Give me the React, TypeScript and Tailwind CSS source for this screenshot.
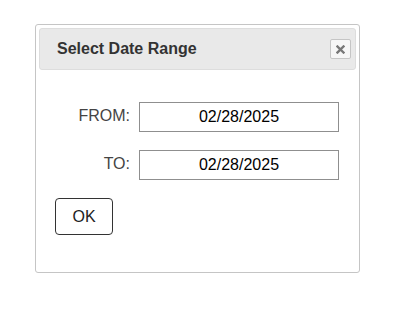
import React, { useState } from 'react';

const today = '02/28/2025';

export default function App() {
  const [from, setFrom] = useState(today);
  const [to, setTo] = useState(today);

  return (
    <div className="min-h-screen bg-white pl-[35px] pt-[24px] font-['Liberation_Sans',Arial,sans-serif]">
      {/* Dialog */}
      <div className="w-[325px] h-[249px] border border-[#c5c5c5] rounded-[3px] p-[3px] bg-white">
        {/* Title bar */}
        <div className="h-[42px] flex items-center justify-between pl-[17px] pr-[4px] bg-[#e9e9e9] border border-[#dddddd] rounded-[3px]">
          <span className="text-[16px] font-bold text-[#333333]">Select Date Range</span>
          <button
            className="w-[21px] h-[20px] flex items-center justify-center bg-[#f6f6f6] border border-[#c5c5c5] rounded-[2px]"
            title="Close"
          >
            <svg width="9" height="9" viewBox="0 0 9 9">
              <path d="M1.5 1.5 L7.5 7.5 M7.5 1.5 L1.5 7.5" stroke="#777777" strokeWidth="2.4" strokeLinecap="square" />
            </svg>
          </button>
        </div>

        {/* Body */}
        <div className="pl-[16px] pt-[32px]">
          <div className="grid grid-cols-[75px_200px] gap-x-[9px] gap-y-[18px]">
            <label className="text-right text-[16px] text-[#444444] pt-[2px]">FROM:</label>
            <input
              value={from}
              onChange={(e) => setFrom(e.target.value)}
              className="h-[30px] w-[200px] border border-[#8f8f8f] text-center text-[16px] text-black outline-none"
            />
            <label className="text-right text-[16px] text-[#444444] pt-[2px]">TO:</label>
            <input
              value={to}
              onChange={(e) => setTo(e.target.value)}
              className="h-[30px] w-[200px] border border-[#8f8f8f] text-center text-[16px] text-black outline-none"
            />
          </div>
          <button className="mt-[18px] w-[58px] h-[37px] border border-[#333333] rounded-[4px] bg-white text-[16px] text-[#222222]">
            OK
          </button>
        </div>
      </div>
    </div>
  );
}
